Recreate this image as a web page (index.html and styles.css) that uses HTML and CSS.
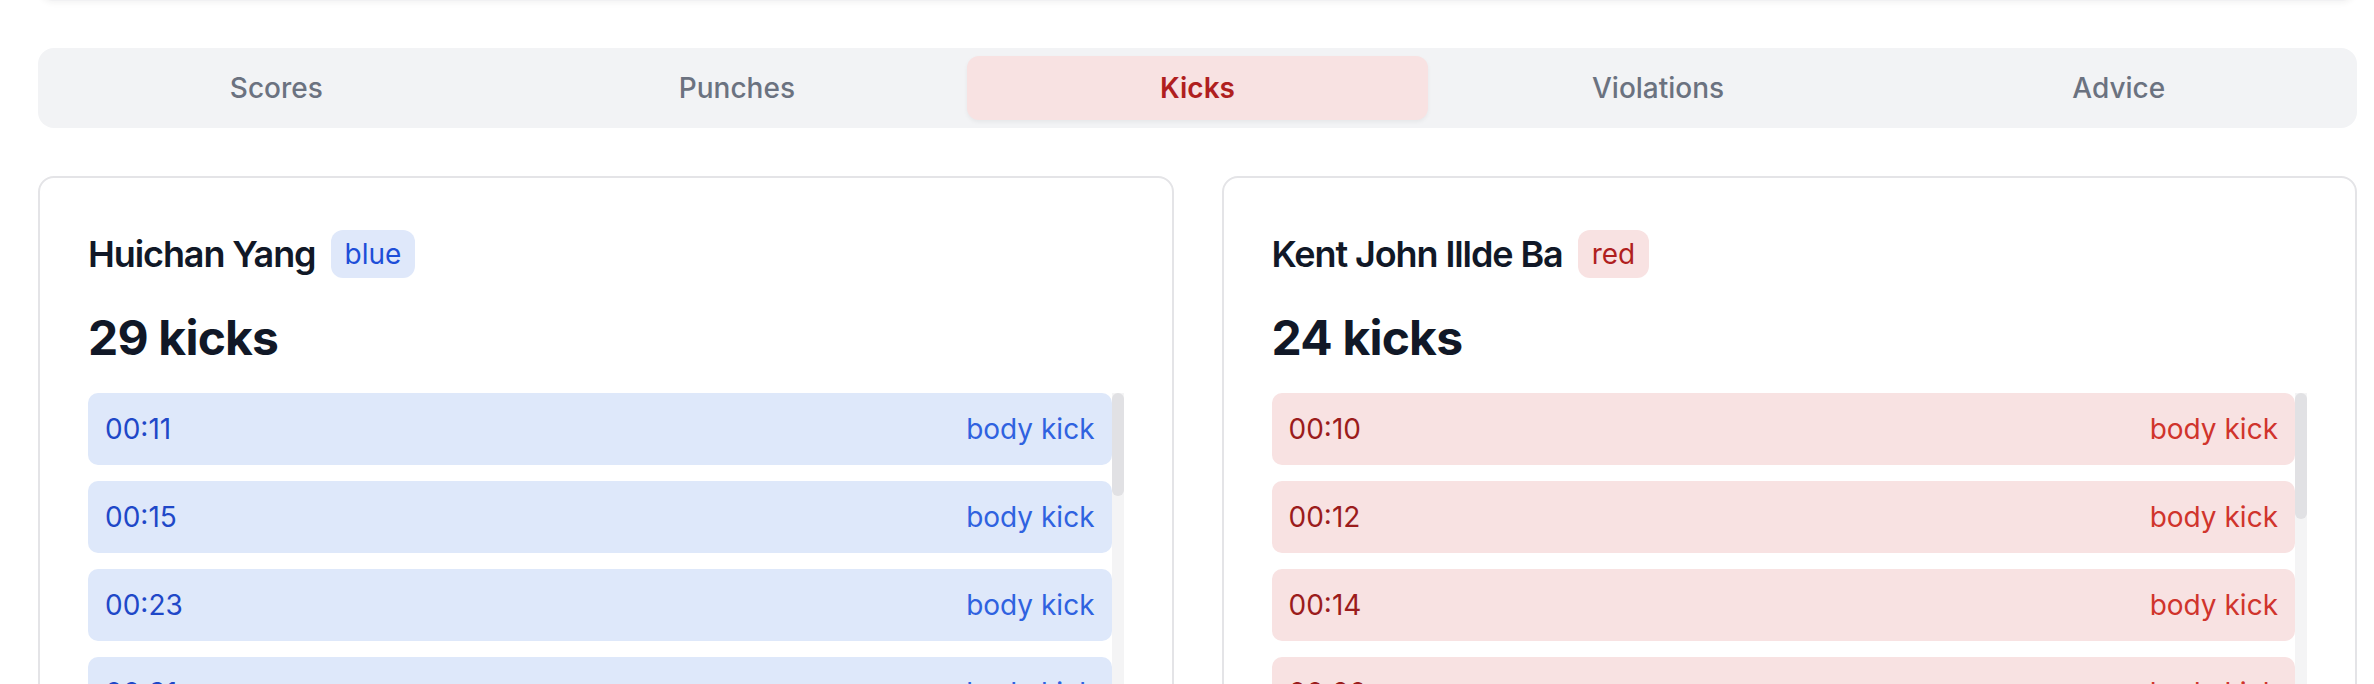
FILE: index.html
```html
<!DOCTYPE html>
<html lang="en">
<head>
<meta charset="utf-8">
<title>Kicks</title>
<link rel="stylesheet" href="styles.css">
</head>
<body>
<div class="page">
  <div class="prev-card"></div>

  <nav class="tabs">
    <button class="tab">Scores</button>
    <button class="tab">Punches</button>
    <button class="tab active">Kicks</button>
    <button class="tab">Violations</button>
    <button class="tab">Advice</button>
  </nav>

  <div class="grid">
    <section class="card blue">
      <div class="head">
        <span class="name">Huichan Yang</span>
        <span class="badge">blue</span>
      </div>
      <h2 class="count">29 kicks</h2>
      <div class="scroller">
        <ul class="list">
          <li class="row"><span class="time">00:11</span><span class="kind">body kick</span></li>
          <li class="row"><span class="time">00:15</span><span class="kind">body kick</span></li>
          <li class="row"><span class="time">00:23</span><span class="kind">body kick</span></li>
          <li class="row"><span class="time">00:31</span><span class="kind">body kick</span></li>
          <li class="row"><span class="time">00:38</span><span class="kind">body kick</span></li>
          <li class="row"><span class="time">00:44</span><span class="kind">head kick</span></li>
          <li class="row"><span class="time">00:52</span><span class="kind">body kick</span></li>
          <li class="row"><span class="time">01:03</span><span class="kind">body kick</span></li>
          <li class="row"><span class="time">01:10</span><span class="kind">body kick</span></li>
          <li class="row"><span class="time">01:19</span><span class="kind">body kick</span></li>
          <li class="row"><span class="time">01:27</span><span class="kind">head kick</span></li>
          <li class="row"><span class="time">01:35</span><span class="kind">body kick</span></li>
          <li class="row"><span class="time">01:42</span><span class="kind">body kick</span></li>
          <li class="row"><span class="time">01:50</span><span class="kind">body kick</span></li>
          <li class="row"><span class="time">02:04</span><span class="kind">body kick</span></li>
          <li class="row"><span class="time">02:12</span><span class="kind">body kick</span></li>
          <li class="row"><span class="time">02:21</span><span class="kind">head kick</span></li>
          <li class="row"><span class="time">02:30</span><span class="kind">body kick</span></li>
          <li class="row"><span class="time">02:38</span><span class="kind">body kick</span></li>
          <li class="row"><span class="time">02:47</span><span class="kind">body kick</span></li>
          <li class="row"><span class="time">02:55</span><span class="kind">body kick</span></li>
          <li class="row"><span class="time">03:06</span><span class="kind">body kick</span></li>
          <li class="row"><span class="time">03:14</span><span class="kind">head kick</span></li>
          <li class="row"><span class="time">03:25</span><span class="kind">body kick</span></li>
          <li class="row"><span class="time">03:33</span><span class="kind">body kick</span></li>
          <li class="row"><span class="time">03:41</span><span class="kind">body kick</span></li>
          <li class="row"><span class="time">03:49</span><span class="kind">body kick</span></li>
          <li class="row"><span class="time">03:56</span><span class="kind">body kick</span></li>
          <li class="row"><span class="time">04:02</span><span class="kind">body kick</span></li>
        </ul>
        <div class="track"><div class="thumb" style="height: 103px"></div></div>
      </div>
    </section>

    <section class="card red">
      <div class="head">
        <span class="name">Kent John Illde Ba</span>
        <span class="badge">red</span>
      </div>
      <h2 class="count">24 kicks</h2>
      <div class="scroller">
        <ul class="list">
          <li class="row"><span class="time">00:10</span><span class="kind">body kick</span></li>
          <li class="row"><span class="time">00:12</span><span class="kind">body kick</span></li>
          <li class="row"><span class="time">00:14</span><span class="kind">body kick</span></li>
          <li class="row"><span class="time">00:20</span><span class="kind">body kick</span></li>
          <li class="row"><span class="time">00:29</span><span class="kind">body kick</span></li>
          <li class="row"><span class="time">00:41</span><span class="kind">head kick</span></li>
          <li class="row"><span class="time">00:56</span><span class="kind">body kick</span></li>
          <li class="row"><span class="time">01:08</span><span class="kind">body kick</span></li>
          <li class="row"><span class="time">01:22</span><span class="kind">body kick</span></li>
          <li class="row"><span class="time">01:37</span><span class="kind">body kick</span></li>
          <li class="row"><span class="time">01:48</span><span class="kind">head kick</span></li>
          <li class="row"><span class="time">02:01</span><span class="kind">body kick</span></li>
          <li class="row"><span class="time">02:15</span><span class="kind">body kick</span></li>
          <li class="row"><span class="time">02:26</span><span class="kind">body kick</span></li>
          <li class="row"><span class="time">02:40</span><span class="kind">body kick</span></li>
          <li class="row"><span class="time">02:52</span><span class="kind">body kick</span></li>
          <li class="row"><span class="time">03:04</span><span class="kind">head kick</span></li>
          <li class="row"><span class="time">03:17</span><span class="kind">body kick</span></li>
          <li class="row"><span class="time">03:28</span><span class="kind">body kick</span></li>
          <li class="row"><span class="time">03:39</span><span class="kind">body kick</span></li>
          <li class="row"><span class="time">03:47</span><span class="kind">body kick</span></li>
          <li class="row"><span class="time">03:55</span><span class="kind">body kick</span></li>
          <li class="row"><span class="time">04:06</span><span class="kind">body kick</span></li>
          <li class="row"><span class="time">04:18</span><span class="kind">body kick</span></li>
        </ul>
        <div class="track"><div class="thumb" style="height: 126px"></div></div>
      </div>
    </section>
  </div>
</div>
</body>
</html>
```

FILE: styles.css
```css
* {
  box-sizing: border-box;
}

html, body {
  margin: 0;
  padding: 0;
  background: #ffffff;
}

body {
  font-family: Inter, "Noto Sans", "Liberation Sans", sans-serif;
  color: #111827;
  overflow: hidden;
}

.page {
  padding: 0 17px 0 38px;
}

.prev-card {
  height: 60px;
  margin-top: -59px;
  border: 2px solid #f1f1f3;
  border-radius: 16px;
  background: #ffffff;
  box-shadow: 0 2px 6px rgba(0, 0, 0, 0.05);
}

.tabs {
  margin-top: 47px;
  display: grid;
  grid-template-columns: repeat(5, 1fr);
  padding: 8px;
  background: #f2f3f5;
  border-radius: 16px;
}

.tab {
  height: 64px;
  border: 0;
  background: transparent;
  border-radius: 12px;
  font-family: inherit;
  font-size: 28px;
  font-weight: 500;
  color: #6b7280;
  cursor: pointer;
}

.tab.active {
  background: #f8e2e2;
  color: #b01f1f;
  font-weight: 600;
  box-shadow: 0 2px 4px rgba(0, 0, 0, 0.05);
}

.grid {
  margin-top: 48px;
  display: grid;
  grid-template-columns: 1fr 1fr;
  gap: 48px;
}

.card {
  border: 2px solid #e4e4e7;
  border-radius: 16px;
  padding: 48px;
  background: #ffffff;
}

.head {
  display: flex;
  align-items: center;
  gap: 15px;
  height: 56px;
}

.name {
  font-size: 36px;
  font-weight: 600;
  line-height: 56px;
  color: #111827;
  letter-spacing: -1.1px;
}

.badge {
  font-size: 28px;
  line-height: 40px;
  padding: 4px 14px;
  border-radius: 12px;
}

.blue .badge {
  background: #dfe8fa;
  color: #1d4ed8;
}

.red .badge {
  background: #f8e2e2;
  color: #b01f1f;
}

.count {
  margin: 24px 0 0;
  font-size: 48px;
  line-height: 64px;
  font-weight: 700;
  color: #111827;
  letter-spacing: -0.8px;
}

.scroller {
  margin-top: 23px;
  display: flex;
  height: 512px;
}

.list {
  flex: 1;
  list-style: none;
  margin: 0;
  padding: 0;
  overflow: hidden;
  display: flex;
  flex-direction: column;
  gap: 16px;
}

.track {
  flex: none;
  width: 12px;
  background: #f4f4f5;
}

.thumb {
  width: 12px;
  background: #e1e1e4;
  border-radius: 6px;
}

.row {
  flex: none;
  display: flex;
  justify-content: space-between;
  align-items: center;
  height: 72px;
  padding: 0 17px;
  border-radius: 10px;
  font-size: 28px;
  line-height: 40px;
}

.blue .row {
  background: #dee8fa;
}

.blue .time {
  color: #1f48c8;
}

.blue .kind {
  color: #2f62e0;
}

.red .row {
  background: #f8e2e2;
}

.red .time {
  color: #9b1c1c;
}

.red .kind {
  color: #d0342c;
}
```
